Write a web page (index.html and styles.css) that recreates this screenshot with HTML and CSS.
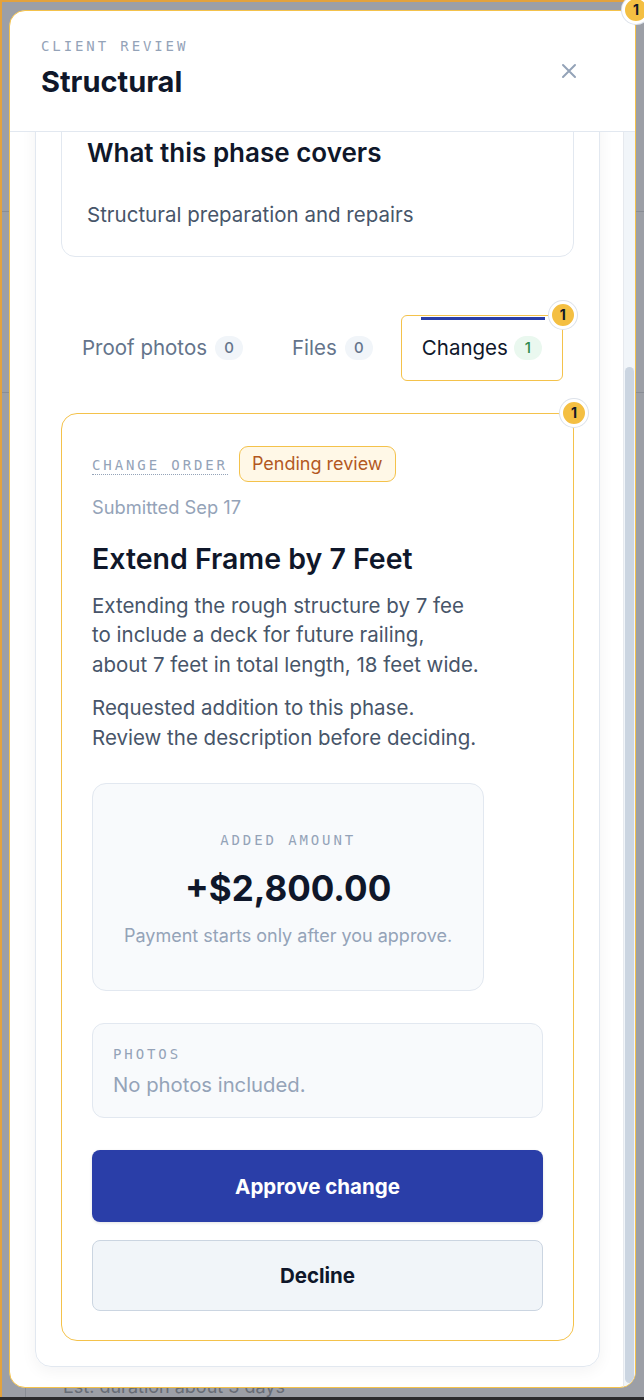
FILE: index.html
```html
<!DOCTYPE html>
<html lang="en">
<head>
    <meta charset="UTF-8">
    <meta name="viewport" content="width=device-width, initial-scale=1.0">
    <link rel="stylesheet" href="styles.css">
</head>
<body>
    <div class="backdrop">
        <!-- page underneath the dialog -->
        <div class="behind">
            <div class="behind-row"></div>
            <div class="behind-row"></div>
            <div class="behind-card">
                <p class="behind-note">Est. duration about 3 days</p>
            </div>
        </div>

        <div class="modal">
            <span class="dot">1</span>

            <header class="modal-head">
                <div>
                    <div class="eyebrow">Client review</div>
                    <h1 class="modal-title">Structural</h1>
                </div>
                <button class="close" aria-label="Close">
                    <svg width="16" height="16" viewBox="0 0 16 16">
                        <path d="M2 2 L14 14 M14 2 L2 14" stroke="#94a3b8" stroke-width="2" stroke-linecap="round" fill="none"/>
                    </svg>
                </button>
            </header>

            <div class="modal-body">
                <div class="scroll">
                    <section class="phase-card">
                        <div class="covers">
                            <h2>What this phase covers</h2>
                            <p>Structural preparation and repairs</p>
                        </div>

                        <nav class="tabs">
                            <div class="tab">Proof photos <span class="count">0</span></div>
                            <div class="tab">Files <span class="count">0</span></div>
                            <div class="tab tab-active">
                                Changes <span class="count count-green">1</span>
                                <span class="dot">1</span>
                            </div>
                        </nav>

                        <article class="change">
                            <span class="dot">1</span>
                            <div class="change-top">
                                <span class="eyebrow eyebrow-dotted">Change order</span>
                                <span class="status">Pending review</span>
                            </div>
                            <div class="submitted">Submitted Sep 17</div>

                            <h3 class="change-title">Extend Frame by 7 Feet</h3>
                            <p class="change-text">Extending the rough structure by 7 fee<br>to include a deck for future railing,<br>about 7 feet in total length, 18 feet wide.</p>
                            <p class="change-text change-note">Requested addition to this phase.<br>Review the description before deciding.</p>

                            <div class="amount">
                                <div class="eyebrow">Added amount</div>
                                <div class="amount-value">+$2,800.00</div>
                                <div class="amount-hint">Payment starts only after you approve.</div>
                            </div>

                            <div class="photos">
                                <div class="eyebrow">Photos</div>
                                <div class="photos-empty">No photos included.</div>
                            </div>

                            <button class="btn btn-primary">Approve change</button>
                            <button class="btn btn-light">Decline</button>
                        </article>
                    </section>
                </div>
                <div class="scrollbar"><div class="thumb"></div></div>
            </div>
        </div>
    </div>
</body>
</html>
```

FILE: styles.css
```css
html, body {
    margin: 0;
    background: #2b2b2d;
}

body {
    font-family: Inter, "Noto Sans", sans-serif;
    color: #0f172a;
}

/* the dimmed page behind the dialog */
.backdrop {
    position: relative;
    height: 1395px;
    border-top: 2px solid #e3a23d;
    border-left: 2px solid #e3a23d;
    background: #9c9fa6;
}

.behind {
    height: 100%;
    overflow: hidden;
    padding-top: 29px;
    box-sizing: border-box;
}

.behind-row {
    height: 180px;
    border-bottom: 1px solid #898d95;
}

.behind-card {
    margin: 899px 0 0 23px;
    padding: 83px 0 0 37px;
    border-left: 1px solid #898d95;
}

.behind-note {
    margin: 0;
    font-size: 18px;
    line-height: 24px;
    color: #676c75;
}

/* dialog */
.modal {
    position: absolute;
    top: 8px;
    left: 7px;
    width: 627px;
    height: 1378px;
    box-sizing: border-box;
    display: flex;
    flex-direction: column;
    background: #fff;
    border: 1px solid #f4c24b;
    border-radius: 16px;
}

.dot {
    position: absolute;
    top: -15px;
    right: -15px;
    width: 22px;
    height: 22px;
    border: 3px solid #fff;
    border-radius: 50%;
    background: #f4bf42;
    box-shadow: 0 0 0 1px #dde2ea;
    color: #111827;
    font-size: 14px;
    font-weight: 700;
    line-height: 22px;
    text-align: center;
    z-index: 2;
}

.modal-head {
    display: flex;
    justify-content: space-between;
    align-items: center;
    padding: 27px 46px 32px 31px;
    border-bottom: 1px solid #e2e8f0;
    border-radius: 15px 15px 0 0;
}

.eyebrow {
    font-family: "DejaVu Sans Mono", "Liberation Mono", monospace;
    font-size: 14px;
    line-height: 16px;
    letter-spacing: 2.9px;
    text-transform: uppercase;
    color: #94a3b8;
}

.modal-title {
    margin: 11px 0 0;
    font-size: 29px;
    line-height: 34px;
    font-weight: 700;
}

.close {
    margin-top: 4px;
    padding: 12px;
    border: 0;
    background: none;
    line-height: 0;
}

.modal-body {
    flex: 1;
    min-height: 0;
    display: flex;
    overflow: hidden;
    border-radius: 0 0 15px 15px;
}

/* shown scrolled to the bottom */
.scroll {
    flex: 1;
    display: flex;
    flex-direction: column;
    justify-content: flex-end;
    overflow: hidden;
    padding: 0 23px 20px 25px;
}

.scrollbar {
    width: 12px;
    box-sizing: border-box;
    padding: 235px 1px 4px;
    background: #f1f5f9;
    border-left: 1px solid #e6e9ee;
}

.thumb {
    height: 1016px;
    border-radius: 6px;
    background: #cbd5e1;
}

.phase-card {
    flex-shrink: 0;
    padding: 25px;
    border: 1px solid #e2e8f0;
    border-radius: 16px;
    box-shadow: 0 4px 16px rgba(15, 23, 42, 0.05);
}

.covers {
    padding: 24px 25px 27px;
    border: 1px solid #e2e8f0;
    border-radius: 14px;
}

.covers h2 {
    margin: 0;
    font-size: 26px;
    line-height: 32px;
    font-weight: 600;
}

.covers p {
    margin: 32px 0 0;
    font-size: 20.5px;
    line-height: 28px;
    color: #475569;
}

/* tabs */
.tabs {
    display: flex;
    gap: 7px;
    margin-top: 58px;
}

.tab {
    position: relative;
    display: flex;
    align-items: center;
    gap: 8px;
    height: 66px;
    box-sizing: border-box;
    padding: 0 20px;
    border: 1px solid transparent;
    border-radius: 6px;
    font-size: 20.5px;
    color: #64748b;
}

.tab-active {
    gap: 6px;
    border-color: #f4c24b;
    color: #0f172a;
}

.tab-active::before {
    content: "";
    position: absolute;
    top: 1px;
    left: 19px;
    right: 17px;
    height: 3px;
    background: #2a3ea8;
}

.count {
    min-width: 28px;
    height: 24px;
    border-radius: 12px;
    background: #f1f5f9;
    color: #64748b;
    font-size: 15px;
    font-weight: 500;
    line-height: 24px;
    text-align: center;
}

.count-green {
    background: #eaf8ef;
    color: #2f8a4c;
}

/* change order card */
.change {
    position: relative;
    margin-top: 32px;
    padding: 32px 30px 29px;
    border: 1px solid #f4c24b;
    border-radius: 16px;
}

.change-top {
    display: flex;
    align-items: center;
    gap: 11px;
}

.eyebrow-dotted {
    margin-top: 5px;
    padding-bottom: 1px;
    border-bottom: 1px dotted #94a3b8;
}

.status {
    height: 36px;
    box-sizing: border-box;
    padding: 0 12px;
    border: 1px solid #f4c24b;
    border-radius: 9px;
    background: #fff8e7;
    color: #b3581f;
    font-size: 18px;
    line-height: 34px;
}

.submitted {
    margin-top: 13px;
    font-size: 18.3px;
    line-height: 24px;
    color: #94a3b8;
}

.change-title {
    margin: 23px 0 0;
    font-size: 28.5px;
    line-height: 34px;
    font-weight: 600;
}

.change-text {
    margin: 15px 0 0;
    font-size: 20.5px;
    line-height: 29.5px;
    color: #475569;
}

.change-note {
    margin-top: 14px;
}

.amount {
    width: fit-content;
    margin-top: 31px;
    padding: 48px 31px 42px;
    border: 1px solid #e2e8f0;
    border-radius: 14px;
    background: #f8fafc;
    text-align: center;
}

.amount-value {
    margin-top: 18px;
    font-size: 35px;
    line-height: 44px;
    font-weight: 700;
}

.amount-hint {
    margin-top: 14px;
    font-size: 18px;
    line-height: 24px;
    color: #94a3b8;
}

.photos {
    margin-top: 32px;
    padding: 22px 20px 19px;
    border: 1px solid #e2e8f0;
    border-radius: 12px;
    background: #f8fafc;
}

.photos-empty {
    margin-top: 10px;
    font-size: 20.3px;
    line-height: 26px;
    color: #94a3b8;
}

.btn {
    display: block;
    width: 100%;
    border-radius: 8px;
    font-family: inherit;
    font-size: 20.5px;
    font-weight: 700;
}

.btn-primary {
    height: 72px;
    margin-top: 32px;
    border: 0;
    background: #2a3ea8;
    color: #fff;
    box-shadow: 0 1px 3px rgba(15, 23, 42, 0.12);
}

.btn-light {
    height: 71px;
    margin-top: 18px;
    border: 1px solid #cbd5e1;
    background: #f1f5f9;
    color: #0f172a;
}
```
